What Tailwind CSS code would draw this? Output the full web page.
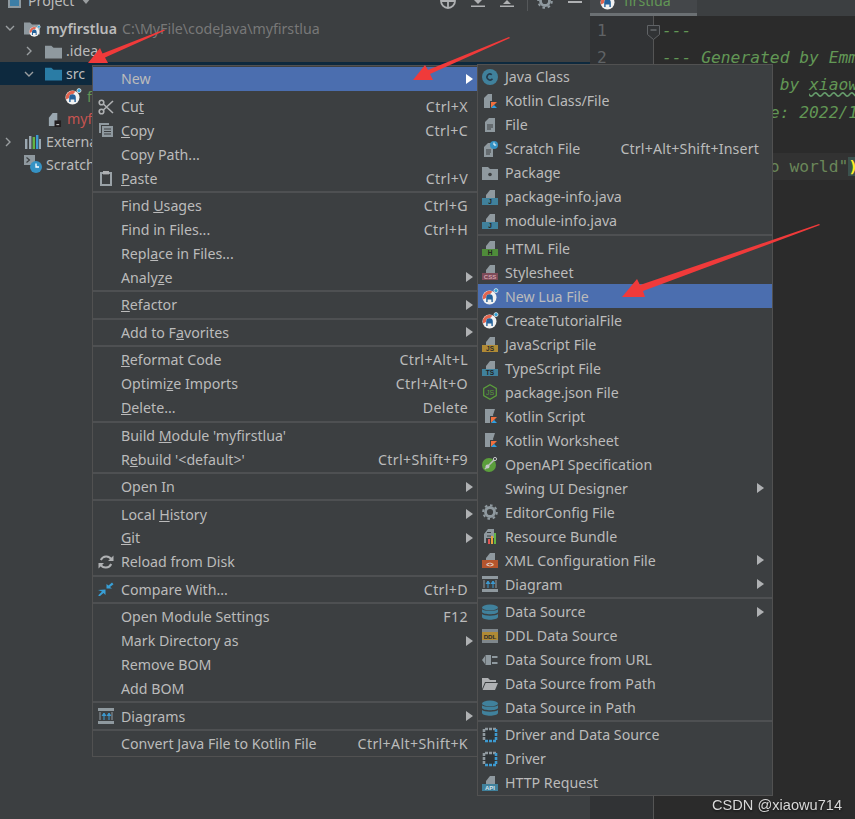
<!DOCTYPE html>
<html lang="en">
<head>
  <meta charset="UTF-8" />
  <title>Project context menu</title>
  <script src="https://cdn.jsdelivr.net/npm/@tailwindcss/browser@4"></script>
</head>
<body class="relative w-[855px] h-[819px] overflow-hidden bg-[#3c3f41] text-[#bbbbbb] text-[14.2px] font-['Noto_Sans','Open_Sans',sans-serif]">

  <!-- icon sprites -->
  <svg class="hidden">
    <symbol id="folder" viewBox="0 0 16 16"><path d="M0 2.5h6l2 2h8v10H0z" fill="currentColor"/></symbol>
    <symbol id="chev-r" viewBox="0 0 10 10"><path d="M3 1l4 4-4 4" fill="none" stroke="#9a9ea0" stroke-width="1.4"/></symbol>
    <symbol id="chev-d" viewBox="0 0 10 10"><path d="M1 3l4 4 4-4" fill="none" stroke="#9a9ea0" stroke-width="1.4"/></symbol>
    <symbol id="sub" viewBox="0 0 7 10"><path d="M0 0l7 5-7 5z" fill="currentColor"/></symbol>
    <symbol id="lua" viewBox="0 0 17 17">
      <circle cx="7.5" cy="9.5" r="7" fill="#f1f1f1"/>
      <path d="M1.2 11.5A6.6 6.6 0 0 1 10.5 3.6L8 6.2A3.4 3.4 0 0 0 4 10z" fill="#e2654f"/>
      <path d="M4.2 14V9.5a3.3 3.3 0 0 1 6.6 0V14H9.4v-2.5H5.6V14z" fill="#24619a"/>
      <circle cx="14" cy="2.6" r="2" fill="#2ea3d8" stroke="#e8e8e8" stroke-width=".8"/>
    </symbol>
    <symbol id="iml" viewBox="0 0 16 16"><path d="M2 6l4-5h5v14H2z" fill="#9aa7b0"/><rect x="8" y="9" width="7" height="7" fill="#231f20"/><rect x="10" y="13" width="3" height="1" fill="#ddd"/></symbol>
    <symbol id="libs" viewBox="0 0 17 16"><rect x="1" y="5" width="2.4" height="10" fill="#9aa7b0"/><rect x="5" y="2" width="2.4" height="13" fill="#9aa7b0"/><rect x="8.6" y="3" width="2.4" height="12" fill="#62b543"/><rect x="12" y="1" width="2.4" height="14" fill="#3d9ad1"/><rect x="15" y="5" width="2" height="10" fill="#9aa7b0"/></symbol>
    <symbol id="scratch" viewBox="0 0 18 18"><path d="M0 0h11v10H0z" fill="#8f999f"/><path d="M2.5 2.5l3 2.5-3 2.5" fill="none" stroke="#3c3f41" stroke-width="1.2"/><circle cx="12" cy="12" r="6" fill="#3592c4"/><path d="M12 8.5V12h3" fill="none" stroke="#fff" stroke-width="1.3"/></symbol>
    <symbol id="cut" viewBox="0 0 16 16"><g fill="none" stroke="#afb1b3" stroke-width="1.6"><circle cx="3.5" cy="3.5" r="2.3"/><circle cx="3.5" cy="12.5" r="2.3"/><path d="M5.3 5l9.7 9M5.3 11l9.7-9"/></g></symbol>
    <symbol id="copy" viewBox="0 0 16 16"><path d="M1 1h10v2H3v8H1z" fill="#8f999f"/><path d="M4 4h11v11H4z" fill="#8f999f"/><path d="M6 7h7M6 9.5h7M6 12h7" stroke="#3c3f41" stroke-width="1.2"/></symbol>
    <symbol id="paste" viewBox="0 0 16 16"><path d="M3 3h10v12H3z" fill="none" stroke="#9aa2a7" stroke-width="2"/><rect x="5" y="1" width="6" height="3.4" fill="#afb1b3"/></symbol>
    <symbol id="reload" viewBox="0 0 16 16"><g fill="none" stroke="#afb1b3" stroke-width="2"><path d="M13.5 5.5A6 6 0 0 0 2.8 6"/><path d="M2.5 10.5a6 6 0 0 0 10.7-.5"/></g><path d="M10 7h5.5V1.5zM6 9H.5v5.5z" fill="#afb1b3"/></symbol>
    <symbol id="compare" viewBox="0 0 16 16"><g fill="#389fd6"><path d="M8.5 7.5V3l2 1.5L14 1.5l1.5 1.8L12 6l2 1.5z"/><path d="M7.5 8.5V14l-2-2L2 15H.5v-1L4 10.5 0 9z"/></g></symbol>
    <symbol id="diagram" viewBox="0 0 16 16"><path d="M0 0h16v3H0zM0 13h16v3H0z" fill="#8f999f"/><path d="M1.5 4h1v8h-1zM13.5 4h1v8h-1z" fill="#8f999f"/><path d="M6 12V7M4 8l2-3 2 3M11 12V7M9 8l2-3 2 3" fill="#3d9ad1" stroke="#3d9ad1"/></symbol>
    <symbol id="class" viewBox="0 0 16 16"><circle cx="8" cy="8" r="8" fill="#40819c"/><circle cx="8" cy="8" r="3" fill="none" stroke="#24394a" stroke-width="1.5" stroke-dasharray="14 5" transform="rotate(35 8 8)"/></symbol>
    <symbol id="kotfile" viewBox="0 0 16 16"><path d="M2 5l4-4h4v14H2z" fill="#8f999f"/><path d="M8 8h8l-4 4 4 4H8z" fill="#3c3f41"/><path d="M9 9h6l-6 6z" fill="#f1703e"/><path d="M9 15l3-3 3 3z" fill="#2f9fe0"/></symbol>
    <symbol id="file" viewBox="0 0 16 16"><path d="M3 5l4-4h6v14H3z" fill="#8f999f"/><path d="M5 8h6M5 10h6M5 12h4" stroke="#3c3f41" stroke-width="1.1"/></symbol>
    <symbol id="scratchfile" viewBox="0 0 16 16"><path d="M2 6l4-4h5v14H2z" fill="#8f999f"/><path d="M4 9h5M4 11h5M4 13h4" stroke="#3c3f41" stroke-width="1.1"/><circle cx="12" cy="4" r="4" fill="#3592c4"/><path d="M12 1.5V4h2.2" fill="none" stroke="#fff"/></symbol>
    <symbol id="package" viewBox="0 0 16 16"><path d="M0 2h6l2 2h8v11H0z" fill="#8f999f"/><circle cx="8" cy="9.5" r="1.8" fill="#3c3f41"/></symbol>
    <symbol id="ftop" viewBox="0 0 16 16"><path d="M4 6l4-5h5v8H4z" fill="#8f999f"/></symbol>
    <symbol id="kotscript" viewBox="0 0 16 16"><path d="M3 1h10l-2 6 2 8H3z" fill="#8f999f"/><path d="M8 8h8l-4 4 4 4H8z" fill="#3c3f41"/><path d="M9 9h6l-6 6z" fill="#f1703e"/><path d="M9 15l3-3 3 3z" fill="#2f9fe0"/></symbol>
    <symbol id="openapi" viewBox="0 0 16 16"><circle cx="7" cy="9" r="7" fill="#5b9e3c"/><path d="M3 13L12 4" stroke="#b9bcbe" stroke-width="1.6"/><circle cx="5.5" cy="10.5" r="2" fill="#c4c6c8"/><circle cx="13" cy="3" r="1.6" fill="none" stroke="#c4c6c8"/></symbol>
    <symbol id="gear" viewBox="0 0 16 16"><circle cx="8" cy="8" r="4.5" fill="none" stroke="#8f999f" stroke-width="2.8"/><circle cx="8" cy="8" r="6.8" fill="none" stroke="#8f999f" stroke-width="2" stroke-dasharray="2.6 2.7"/></symbol>
    <symbol id="bundle" viewBox="0 0 16 16"><path d="M2 6l4-5h6v14H2z" fill="#8f999f"/><path d="M5 8h4M5 4.5h4" stroke="#3c3f41"/><rect x="4" y="10" width="11" height="6" fill="#3c3f41"/><rect x="6" y="11" width="2" height="5" fill="#e05555"/><rect x="9" y="8" width="2" height="8" fill="#e8a33d"/><rect x="12" y="5" width="2" height="11" fill="#62b543"/></symbol>
    <symbol id="db" viewBox="0 0 16 16"><g fill="#40819c"><ellipse cx="8" cy="3.5" rx="8" ry="3"/><path d="M0 5.2C2 7.5 14 7.5 16 5.2V8c-1 3-15 3-16 0z"/><path d="M0 10C2 12.3 14 12.3 16 10v3c-1 3.6-15 3.6-16 0z"/></g></symbol>
    <symbol id="plug" viewBox="0 0 16 16"><path d="M0 8l3-4v8z" fill="#8f999f"/><path d="M3.5 3H9v10H3.5z" fill="#8f999f"/><path d="M10 4h5.5v2H10zM10 10h5.5v2H10z" fill="#8f999f"/></symbol>
    <symbol id="open" viewBox="0 0 16 16"><path d="M0 2h6l2 2h6v2H3l-3 7z" fill="#afb1b3"/><path d="M3.6 7H16l-3 7H.6z" fill="#afb1b3"/></symbol>
    <symbol id="driver" viewBox="0 0 16 16"><path d="M2 2h12v12H2z" fill="#2f3437"/><path d="M14 2H2v12" fill="none" stroke="#8f999f" stroke-width="2.6" stroke-dasharray="3 1"/><path d="M14 2v12H2" fill="none" stroke="#3d9ad1" stroke-width="2.6" stroke-dasharray="3 1"/></symbol>
  </svg>

  <!-- project panel + editor, side by side -->
  <div class="flex h-full">
    <div class="w-[590px] shrink-0 h-full">
      <div class="h-[13px] flex items-end overflow-hidden pl-[8px]">
        <div class="flex items-center h-[24px] w-full">
          <span class="size-[13px] border-2 border-[#8f999f] bg-[#3d7ea6] mr-[7px]"></span>
          <span class="w-[53px]">Project</span>
          <svg class="w-[10px] h-[6px]" viewBox="0 0 10 6"><path d="M0 0h10L5 6z" fill="#9a9ea0"/></svg>
          <div class="ml-auto flex items-center pr-[8px] text-[#afb1b3]">
            <svg class="size-[16px] mr-[15px]" viewBox="0 0 16 16"><g fill="none" stroke="currentColor" stroke-width="1.8"><circle cx="8" cy="8" r="7"/><path d="M8 1v14M1 8h14"/></g></svg>
            <svg class="size-[14px] mr-[15px]" viewBox="0 0 14 14"><path d="M0 13h14v-1.6H0zM3 6h8L7 10z" fill="currentColor"/></svg>
            <svg class="size-[14px] mr-[13px]" viewBox="0 0 14 14"><path d="M0 13h14v-1.6H0zM3 10h8L7 6z" fill="currentColor"/></svg>
            <span class="w-px h-[20px] bg-[#55585a] mr-[9px]"></span>
            <svg class="size-[16px] mr-[15px]" viewBox="0 0 16 16"><use href="#gear"/></svg>
            <span class="w-[14px] h-[2px] bg-current mt-[2px]"></span>
          </div>
        </div>
      </div>
      <div class="mt-[4px]">
        <div class="flex items-center h-[22.7px] pl-[5px]"><svg class="size-[10px] mr-[9px]"><use href="#chev-d"/></svg><span class="relative size-[17px] mr-[5px] text-[#8f999f]"><svg class="size-[16px]"><use href="#folder"/></svg><svg class="absolute left-[5px] top-[5px] size-[12px]"><use href="#lua"/></svg></span><b class="font-semibold mr-[5px]">myfirstlua</b><span class="text-[#787878]">C:\MyFile\codeJava\myfirstlua</span></div>
        <div class="flex items-center h-[22.7px] pl-[24px]"><svg class="size-[10px] mr-[11px]"><use href="#chev-r"/></svg><svg class="size-[17px] mr-[4px] text-[#8f999f]"><use href="#folder"/></svg>.idea</div>
        <div class="flex items-center h-[22.7px] pl-[24px] bg-[#0d293e]"><svg class="size-[10px] mr-[11px]"><use href="#chev-d"/></svg><svg class="size-[17px] mr-[4px] text-[#2a7ca5]"><use href="#folder"/></svg>src</div>
        <div class="flex items-center h-[22.7px] pl-[65px]"><svg class="size-[17px] mr-[5px]"><use href="#lua"/></svg><span class="text-[#629755]">f</span></div>
        <div class="flex items-center h-[22.7px] pl-[47px]"><svg class="size-[15px] mr-[5px]"><use href="#iml"/></svg><span class="text-[#c75450]">myf</span></div>
        <div class="flex items-center h-[22.7px] pl-[3px]"><svg class="size-[10px] mr-[11px]"><use href="#chev-r"/></svg><svg class="w-[17px] h-[16px] mr-[5px]"><use href="#libs"/></svg>Externa</div>
        <div class="flex items-center h-[22.7px] pl-[24px]"><svg class="size-[18px] mr-[4px]"><use href="#scratch"/></svg>Scratch</div>
      </div>
    </div>

    <div class="flex-1 min-w-0 flex flex-col">
      <div class="h-[16px] shrink-0 overflow-hidden">
        <div class="w-[107px] h-[16px] border-b-[3px] border-[#6b7073] flex items-end pl-[10px] bg-[#44474a]">
          <div class="flex items-center h-[24px] gap-[7px]"><svg class="size-[17px]"><use href="#lua"/></svg><span class="text-[#629755]">firstlua</span></div>
        </div>
      </div>
      <div class="flex-1 flex bg-[#2b2b2b]">
        <div class="relative w-[64px] bg-[#313335] border-r border-[#555555] pl-[7px] pt-[1px] text-[#606366] font-['DejaVu_Sans_Mono',monospace] text-[16.3px]">
          <div class="h-[27.2px] leading-[27px]">1</div>
          <div class="h-[27.2px] leading-[27px]">2</div>
          <svg class="absolute right-[-7px] top-[9px] w-[13px] h-[15px]" viewBox="0 0 13 15"><path d="M.5.5h12v9l-6 5-6-5z" fill="#313335" stroke="#606366"/><path d="M3.5 5h6" stroke="#808487"/></svg>
        </div>
        <div class="flex-1 min-w-0 pt-[1px] font-['DejaVu_Sans_Mono',monospace] text-[16.3px] text-[#629755] italic overflow-hidden">
          <div class="h-[27.2px] leading-[27px] pl-[8px] whitespace-pre">---</div>
          <div class="h-[27.2px] leading-[27px] pl-[8px] whitespace-pre">--- Generated by EmmyLua</div>
          <div class="h-[27.2px] leading-[27px] pl-[8px] whitespace-pre">--- Created by <span class="underline decoration-wavy decoration-[#659c6b]">xiaowu714</span></div>
          <div class="h-[27.2px] leading-[27px] pl-[8px] whitespace-pre">--- DateTime: 2022/1</div>
          <div class="h-[27.2px] leading-[27px] pl-[8px] whitespace-pre"></div>
          <div class="h-[27.2px] leading-[27px] pl-[8px] whitespace-pre bg-[#323232] not-italic text-[#6a8759]">print("hello world"<span class="bg-[#3b514d] text-[#ffef28] font-bold">)</span></div>
        </div>
      </div>
    </div>
  </div>

  <!-- main context menu -->
  <div class="absolute left-[92px] top-[65px] w-[386px] bg-[#3c3f41] border border-[#515151] pt-[1px]">
    <div class="flex items-center h-[24px] pl-[5px] pr-[4px] bg-[#4b6eaf]"><i class="size-4 mr-[7px]"></i>New<svg class="ml-auto w-[7px] h-[10px] text-white"><use href="#sub"/></svg></div>
    <div class="h-[3.63px]"></div>
    <div class="flex items-center h-[23.9px] pl-[5px] pr-[9px]"><svg class="size-4 mr-[7px]"><use href="#cut"/></svg><span>Cu<u>t</u></span><span class="ml-auto tracking-[0.35px]">Ctrl+X</span></div>
    <div class="flex items-center h-[23.9px] pl-[5px] pr-[9px]"><svg class="size-4 mr-[7px]"><use href="#copy"/></svg><span><u>C</u>opy</span><span class="ml-auto tracking-[0.35px]">Ctrl+C</span></div>
    <div class="flex items-center h-[23.9px] pl-[5px] pr-[9px]"><i class="size-4 mr-[7px]"></i>Copy Path...</div>
    <div class="flex items-center h-[23.9px] pl-[5px] pr-[9px]"><svg class="size-4 mr-[7px]"><use href="#paste"/></svg><span><u>P</u>aste</span><span class="ml-auto tracking-[0.35px]">Ctrl+V</span></div>
    <div class="h-[3.63px] flex items-center"><div class="w-full h-[2px] bg-[#4e5052]"></div></div>
    <div class="flex items-center h-[23.9px] pl-[5px] pr-[9px]"><i class="size-4 mr-[7px]"></i><span>Find <u>U</u>sages</span><span class="ml-auto tracking-[0.35px]">Ctrl+G</span></div>
    <div class="flex items-center h-[23.9px] pl-[5px] pr-[9px]"><i class="size-4 mr-[7px]"></i>Find in Files...<span class="ml-auto tracking-[0.35px]">Ctrl+H</span></div>
    <div class="flex items-center h-[23.9px] pl-[5px] pr-[9px]"><i class="size-4 mr-[7px]"></i><span>Repl<u>a</u>ce in Files...</span></div>
    <div class="flex items-center h-[23.9px] pl-[5px] pr-[4px]"><i class="size-4 mr-[7px]"></i><span>Analy<u>z</u>e</span><svg class="ml-auto w-[7px] h-[10px] text-[#afb1b3]"><use href="#sub"/></svg></div>
    <div class="h-[3.63px] flex items-center"><div class="w-full h-[2px] bg-[#4e5052]"></div></div>
    <div class="flex items-center h-[23.9px] pl-[5px] pr-[4px]"><i class="size-4 mr-[7px]"></i><span><u>R</u>efactor</span><svg class="ml-auto w-[7px] h-[10px] text-[#afb1b3]"><use href="#sub"/></svg></div>
    <div class="h-[3.63px] flex items-center"><div class="w-full h-[2px] bg-[#4e5052]"></div></div>
    <div class="flex items-center h-[23.9px] pl-[5px] pr-[4px]"><i class="size-4 mr-[7px]"></i><span>Add to F<u>a</u>vorites</span><svg class="ml-auto w-[7px] h-[10px] text-[#afb1b3]"><use href="#sub"/></svg></div>
    <div class="h-[3.63px] flex items-center"><div class="w-full h-[2px] bg-[#4e5052]"></div></div>
    <div class="flex items-center h-[23.9px] pl-[5px] pr-[9px]"><i class="size-4 mr-[7px]"></i><span><u>R</u>eformat Code</span><span class="ml-auto tracking-[0.35px]">Ctrl+Alt+L</span></div>
    <div class="flex items-center h-[23.9px] pl-[5px] pr-[9px]"><i class="size-4 mr-[7px]"></i><span>Optimi<u>z</u>e Imports</span><span class="ml-auto tracking-[0.35px]">Ctrl+Alt+O</span></div>
    <div class="flex items-center h-[23.9px] pl-[5px] pr-[9px]"><i class="size-4 mr-[7px]"></i><span><u>D</u>elete...</span><span class="ml-auto tracking-[0.35px]">Delete</span></div>
    <div class="h-[3.63px] flex items-center"><div class="w-full h-[2px] bg-[#4e5052]"></div></div>
    <div class="flex items-center h-[23.9px] pl-[5px] pr-[9px]"><i class="size-4 mr-[7px]"></i><span>Build <u>M</u>odule 'myfirstlua'</span></div>
    <div class="flex items-center h-[23.9px] pl-[5px] pr-[9px]"><i class="size-4 mr-[7px]"></i><span>R<u>e</u>build '&lt;default&gt;'</span><span class="ml-auto tracking-[0.35px]">Ctrl+Shift+F9</span></div>
    <div class="h-[3.63px] flex items-center"><div class="w-full h-[2px] bg-[#4e5052]"></div></div>
    <div class="flex items-center h-[23.9px] pl-[5px] pr-[4px]"><i class="size-4 mr-[7px]"></i>Open In<svg class="ml-auto w-[7px] h-[10px] text-[#afb1b3]"><use href="#sub"/></svg></div>
    <div class="h-[3.63px] flex items-center"><div class="w-full h-[2px] bg-[#4e5052]"></div></div>
    <div class="flex items-center h-[23.9px] pl-[5px] pr-[4px]"><i class="size-4 mr-[7px]"></i><span>Local <u>H</u>istory</span><svg class="ml-auto w-[7px] h-[10px] text-[#afb1b3]"><use href="#sub"/></svg></div>
    <div class="flex items-center h-[23.9px] pl-[5px] pr-[4px]"><i class="size-4 mr-[7px]"></i><span><u>G</u>it</span><svg class="ml-auto w-[7px] h-[10px] text-[#afb1b3]"><use href="#sub"/></svg></div>
    <div class="flex items-center h-[23.9px] pl-[5px] pr-[9px]"><svg class="size-4 mr-[7px]"><use href="#reload"/></svg>Reload from Disk</div>
    <div class="h-[3.63px] flex items-center"><div class="w-full h-[2px] bg-[#4e5052]"></div></div>
    <div class="flex items-center h-[23.9px] pl-[5px] pr-[9px]"><svg class="size-4 mr-[7px]"><use href="#compare"/></svg>Compare With...<span class="ml-auto tracking-[0.35px]">Ctrl+D</span></div>
    <div class="h-[3.63px] flex items-center"><div class="w-full h-[2px] bg-[#4e5052]"></div></div>
    <div class="flex items-center h-[23.9px] pl-[5px] pr-[9px]"><i class="size-4 mr-[7px]"></i>Open Module Settings<span class="ml-auto tracking-[0.35px]">F12</span></div>
    <div class="flex items-center h-[23.9px] pl-[5px] pr-[4px]"><i class="size-4 mr-[7px]"></i>Mark Directory as<svg class="ml-auto w-[7px] h-[10px] text-[#afb1b3]"><use href="#sub"/></svg></div>
    <div class="flex items-center h-[23.9px] pl-[5px] pr-[9px]"><i class="size-4 mr-[7px]"></i>Remove BOM</div>
    <div class="flex items-center h-[23.9px] pl-[5px] pr-[9px]"><i class="size-4 mr-[7px]"></i>Add BOM</div>
    <div class="h-[3.63px] flex items-center"><div class="w-full h-[2px] bg-[#4e5052]"></div></div>
    <div class="flex items-center h-[23.9px] pl-[5px] pr-[4px]"><svg class="size-4 mr-[7px]"><use href="#diagram"/></svg>Diagrams<svg class="ml-auto w-[7px] h-[10px] text-[#afb1b3]"><use href="#sub"/></svg></div>
    <div class="h-[3.63px] flex items-center"><div class="w-full h-[2px] bg-[#4e5052]"></div></div>
    <div class="flex items-center h-[23.9px] pl-[5px] pr-[9px]"><i class="size-4 mr-[7px]"></i>Convert Java File to Kotlin File<span class="ml-auto tracking-[0.35px]">Ctrl+Alt+Shift+K</span></div>
  </div>

  <!-- New submenu -->
  <div class="absolute left-[477px] top-[64px] w-[296px] bg-[#3c3f41] border border-[#515151]">
    <div class="flex items-center h-[24px] pl-[4px]"><svg class="size-4 mr-[7px]"><use href="#class"/></svg>Java Class</div>
    <div class="flex items-center h-[24px] pl-[4px]"><svg class="size-4 mr-[7px]"><use href="#kotfile"/></svg>Kotlin Class/File</div>
    <div class="flex items-center h-[24px] pl-[4px]"><svg class="size-4 mr-[7px]"><use href="#file"/></svg>File</div>
    <div class="flex items-center h-[24px] pl-[4px] pr-[13px]"><svg class="size-4 mr-[7px]"><use href="#scratchfile"/></svg>Scratch File<span class="ml-auto tracking-[0.15px]">Ctrl+Alt+Shift+Insert</span></div>
    <div class="flex items-center h-[24px] pl-[4px]"><svg class="size-4 mr-[7px]"><use href="#package"/></svg>Package</div>
    <div class="flex items-center h-[24px] pl-[4px]"><svg class="size-4 mr-[7px]" viewBox="0 0 16 16"><use href="#ftop"/><rect y="9" width="16" height="7" fill="#40819c"/><text x="8" y="15.2" text-anchor="middle" font-size="6.5" font-weight="700" fill="#222" font-family="Liberation Sans">J</text></svg>package-info.java</div>
    <div class="flex items-center h-[24px] pl-[4px]"><svg class="size-4 mr-[7px]" viewBox="0 0 16 16"><use href="#ftop"/><rect y="9" width="16" height="7" fill="#40819c"/><text x="8" y="15.2" text-anchor="middle" font-size="6.5" font-weight="700" fill="#222" font-family="Liberation Sans">J</text></svg>module-info.java</div>
    <div class="h-[3.33px] flex items-center"><div class="w-full h-[2px] bg-[#4e5052]"></div></div>
    <div class="flex items-center h-[24px] pl-[4px]"><svg class="size-4 mr-[7px]" viewBox="0 0 16 16"><use href="#ftop"/><rect y="9" width="16" height="7" fill="#4f8c3a"/><text x="8" y="15.2" text-anchor="middle" font-size="6.5" font-weight="700" fill="#222" font-family="Liberation Sans">H</text></svg>HTML File</div>
    <div class="flex items-center h-[24px] pl-[4px]"><svg class="size-4 mr-[7px]" viewBox="0 0 16 16"><use href="#ftop"/><rect y="9" width="16" height="7" fill="#7d4a58"/><text x="8" y="15.2" text-anchor="middle" font-size="6" font-weight="700" fill="#d0a0ac" font-family="Liberation Sans">CSS</text></svg>Stylesheet</div>
    <div class="flex items-center h-[24px] pl-[4px] bg-[#4b6eaf]"><svg class="size-[17px] mr-[6px]"><use href="#lua"/></svg>New Lua File</div>
    <div class="flex items-center h-[24px] pl-[4px]"><svg class="size-[17px] mr-[6px]"><use href="#lua"/></svg>CreateTutorialFile</div>
    <div class="flex items-center h-[24px] pl-[4px]"><svg class="size-4 mr-[7px]" viewBox="0 0 16 16"><use href="#ftop"/><rect y="9" width="16" height="7" fill="#b08a35"/><text x="8" y="15.2" text-anchor="middle" font-size="6.5" font-weight="700" fill="#2b2b2b" font-family="Liberation Sans">JS</text></svg>JavaScript File</div>
    <div class="flex items-center h-[24px] pl-[4px]"><svg class="size-4 mr-[7px]" viewBox="0 0 16 16"><use href="#ftop"/><rect y="9" width="16" height="7" fill="#40819c"/><text x="8" y="15.2" text-anchor="middle" font-size="6.5" font-weight="700" fill="#222" font-family="Liberation Sans">TS</text></svg>TypeScript File</div>
    <div class="flex items-center h-[24px] pl-[4px]"><svg class="size-4 mr-[7px]" viewBox="0 0 16 16"><path d="M8 .8l6.3 3.6v7.2L8 15.2 1.7 11.6V4.4z" fill="none" stroke="#5b9e3c" stroke-width="1.2"/><text x="8" y="11" text-anchor="middle" font-size="7" fill="#5b9e3c" font-family="Liberation Sans">JS</text></svg>package.json File</div>
    <div class="flex items-center h-[24px] pl-[4px]"><svg class="size-4 mr-[7px]"><use href="#kotscript"/></svg>Kotlin Script</div>
    <div class="flex items-center h-[24px] pl-[4px]"><svg class="size-4 mr-[7px]"><use href="#kotscript"/></svg>Kotlin Worksheet</div>
    <div class="flex items-center h-[24px] pl-[4px]"><svg class="size-4 mr-[7px]"><use href="#openapi"/></svg>OpenAPI Specification</div>
    <div class="flex items-center h-[24px] pl-[4px] pr-[8px]"><i class="size-4 mr-[7px]"></i>Swing UI Designer<svg class="ml-auto w-[7px] h-[10px] text-[#afb1b3]"><use href="#sub"/></svg></div>
    <div class="flex items-center h-[24px] pl-[4px]"><svg class="size-4 mr-[7px]"><use href="#gear"/></svg>EditorConfig File</div>
    <div class="flex items-center h-[24px] pl-[4px]"><svg class="size-4 mr-[7px]"><use href="#bundle"/></svg>Resource Bundle</div>
    <div class="flex items-center h-[24px] pl-[4px] pr-[8px]"><svg class="size-4 mr-[7px]" viewBox="0 0 16 16"><use href="#ftop"/><rect y="8" width="16" height="8" fill="#b4552d"/><text x="8" y="14.6" text-anchor="middle" font-size="6.5" font-weight="700" fill="#e8d8cf" font-family="Liberation Sans">&lt;&gt;</text></svg>XML Configuration File<svg class="ml-auto w-[7px] h-[10px] text-[#afb1b3]"><use href="#sub"/></svg></div>
    <div class="flex items-center h-[24px] pl-[4px] pr-[8px]"><svg class="size-4 mr-[7px]"><use href="#diagram"/></svg>Diagram<svg class="ml-auto w-[7px] h-[10px] text-[#afb1b3]"><use href="#sub"/></svg></div>
    <div class="h-[3.33px] flex items-center"><div class="w-full h-[2px] bg-[#4e5052]"></div></div>
    <div class="flex items-center h-[24px] pl-[4px] pr-[8px]"><svg class="size-4 mr-[7px]"><use href="#db"/></svg>Data Source<svg class="ml-auto w-[7px] h-[10px] text-[#afb1b3]"><use href="#sub"/></svg></div>
    <div class="flex items-center h-[24px] pl-[4px]"><svg class="size-4 mr-[7px]" viewBox="0 0 16 16"><rect y="1" width="16" height="14" fill="#7f878c"/><rect y="4" width="16" height="8" fill="#b08a35"/><text x="8" y="10.8" text-anchor="middle" font-size="6.2" font-weight="700" fill="#2b2b2b" font-family="Liberation Sans">DDL</text></svg>DDL Data Source</div>
    <div class="flex items-center h-[24px] pl-[4px]"><svg class="size-4 mr-[7px]"><use href="#plug"/></svg>Data Source from URL</div>
    <div class="flex items-center h-[24px] pl-[4px]"><svg class="size-4 mr-[7px]"><use href="#open"/></svg>Data Source from Path</div>
    <div class="flex items-center h-[24px] pl-[4px]"><svg class="size-4 mr-[7px]"><use href="#db"/></svg>Data Source in Path</div>
    <div class="h-[3.33px] flex items-center"><div class="w-full h-[2px] bg-[#4e5052]"></div></div>
    <div class="flex items-center h-[24px] pl-[4px]"><svg class="size-4 mr-[7px]"><use href="#driver"/></svg>Driver and Data Source</div>
    <div class="flex items-center h-[24px] pl-[4px]"><svg class="size-4 mr-[7px]"><use href="#driver"/></svg>Driver</div>
    <div class="flex items-center h-[24px] pl-[4px]"><svg class="size-4 mr-[7px]" viewBox="0 0 16 16"><use href="#ftop"/><rect y="9" width="16" height="7" fill="#40819c"/><text x="8" y="15.2" text-anchor="middle" font-size="6" font-weight="700" fill="#d5e6ee" font-family="Liberation Sans">API</text></svg>HTTP Request</div>
  </div>

  <!-- red annotation arrows -->
  <svg class="absolute inset-0 pointer-events-none" width="855" height="819" viewBox="0 0 855 819">
    <g fill="#f03a3a">
      <path d="M165 30.5L105 57.5L108 63L88 63L100 48L102.5 53.5L164 29.5z"/>
      <path d="M510 38L430 74L433 80L413 80L425 65L428 70L509 37z"/>
      <path d="M820 225L643 291L645 297L622 297L637 279L640 285L819 224z"/>
    </g>
  </svg>

  <span class="absolute left-[712px] top-[795px] font-['Liberation_Sans',sans-serif] text-[14.6px] text-[#d8d8d8] drop-shadow-[0_1px_1px_rgba(0,0,0,0.6)]">CSDN @xiaowu714</span>
</body>
</html>
